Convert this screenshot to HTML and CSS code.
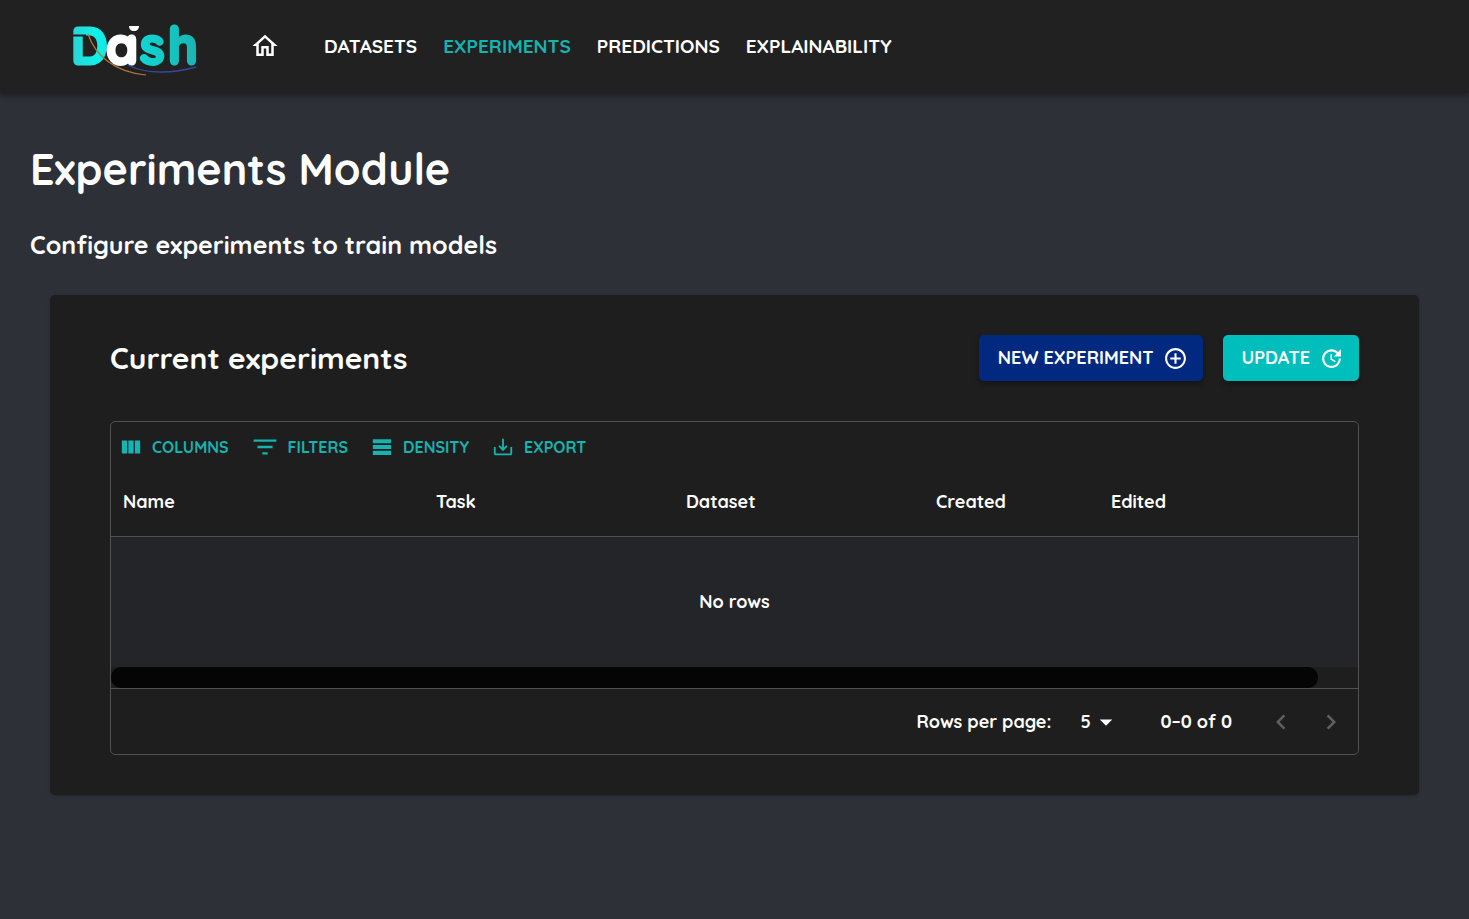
FILE: index.html
```html
<!DOCTYPE html>
<html lang="en">
<head>
<meta charset="utf-8">
<title>Dash - Experiments</title>
<link rel="stylesheet" href="styles.css">
</head>
<body>
<header class="appbar">
  <a class="logo" href="#" aria-label="Dash">
    <svg width="128" height="56" viewBox="0 0 128 56">
      <defs>
        <linearGradient id="teal" x1="0" y1="0" x2="1" y2="0">
          <stop offset="0" stop-color="#2cd3d6"/>
          <stop offset="0.2" stop-color="#10f0ea"/>
          <stop offset="0.6" stop-color="#12d2ce"/>
          <stop offset="1" stop-color="#1ab3b3"/>
        </linearGradient>
      </defs>
      <text class="logo-text" x="-1 34 68 96" y="46"><tspan class="logo-teal">D</tspan><tspan class="logo-white">a</tspan><tspan class="logo-teal">sh</tspan></text>
      <path d="M57 8h10c0 3-2 5-5 5S57 11 57 8z" fill="#fff"/>
      <path d="M0 17.500h14" stroke="#212121" stroke-width="2"/>
      <path d="M16 16C23 37 42 54 74 57" fill="none" stroke="#b77a35" stroke-width="1.200"/>
      <path d="M56 47C75 57 103 55 124 49" fill="none" stroke="#36479c" stroke-width="1.400"/>
    </svg>
  </a>
  <nav class="nav">
    <a class="home" href="#" aria-label="Home">
      <svg width="30" height="30" viewBox="0 0 24 24" fill="currentColor"><path d="m12 5.690 5 4.500V18h-2v-6H9v6H7v-7.810l5-4.500M12 3 2 12h3v8h6v-6h2v6h6v-8h3L12 3z"/></svg>
    </a>
    <a class="nav-link" href="#">DATASETS</a>
    <a class="nav-link active" href="#">EXPERIMENTS</a>
    <a class="nav-link" href="#">PREDICTIONS</a>
    <a class="nav-link" href="#">EXPLAINABILITY</a>
  </nav>
</header>
<main class="page">
  <h1 class="title">Experiments Module</h1>
  <p class="subtitle">Configure experiments to train models</p>
  <section class="card">
    <div class="card-head">
      <h2 class="card-title">Current experiments</h2>
      <div class="actions">
        <button class="btn primary" type="button">NEW EXPERIMENT
          <svg width="25" height="25" viewBox="0 0 24 24" fill="currentColor"><path d="M13 7h-2v4H7v2h4v4h2v-4h4v-2h-4V7zm-1-5C6.480 2 2 6.480 2 12s4.480 10 10 10 10-4.480 10-10S17.520 2 12 2zm0 18c-4.410 0-8-3.590-8-8s3.590-8 8-8 8 3.590 8 8-3.590 8-8 8z"/></svg>
        </button>
        <button class="btn secondary" type="button">UPDATE
          <svg width="25" height="25" viewBox="0 0 24 24" fill="currentColor"><path d="M21 10.120h-6.780l2.740-2.820c-2.730-2.700-7.150-2.800-9.880-.1-2.730 2.710-2.730 7.080 0 9.790s7.150 2.710 9.880 0C18.320 15.650 19 14.080 19 12.100h2c0 1.980-.88 4.550-2.640 6.290-3.510 3.480-9.210 3.480-12.720 0-3.500-3.470-3.530-9.110-.02-12.580s9.140-3.470 12.650 0L21 3v7.120zM12.500 8v4.250l3.500 2.080-.72 1.210L11 13V8h1.500z"/></svg>
        </button>
      </div>
    </div>
    <div class="grid">
      <div class="toolbar">
        <button class="tool" type="button"><svg width="22" height="22" viewBox="0 0 24 24" fill="currentColor"><path d="M2 5h5.800v14H2zM9.100 5h5.800v14H9.100zM16.200 5H22v14h-5.800z"/></svg>COLUMNS</button>
        <button class="tool" type="button"><svg width="26" height="26" viewBox="0 0 24 24" fill="currentColor"><path d="M9.500 19h5v-2.200h-5V19zM1.500 5v2.200h21V5h-21zM5 13.100h14v-2.200H5v2.200z"/></svg>FILTERS</button>
        <button class="tool" type="button"><svg width="22" height="22" viewBox="0 0 24 24" fill="currentColor"><path d="M2 3.500h20V8H2zM2 9.800h20v4.500H2zM2 16.100h20v4.500H2z"/></svg>DENSITY</button>
        <button class="tool" type="button"><svg width="22" height="22" viewBox="0 0 24 24" fill="currentColor"><path d="M20 12v7H4v-7H2v7c0 1.100.9 2 2 2h16c1.100 0 2-.9 2-2v-7h-2zm-7 .67 2.590-2.580L17 11.500l-5 5-5-5 1.410-1.410L11 12.670V3h2z"/></svg>EXPORT</button>
      </div>
      <table class="table">
        <thead>
          <tr><th class="c-name">Name</th><th class="c-wide">Task</th><th class="c-wide">Dataset</th><th class="c-date">Created</th><th>Edited</th></tr>
        </thead>
        <tbody>
          <tr><td class="empty" colspan="5">No rows</td></tr>
        </tbody>
      </table>
      <div class="scrollbar"><div class="thumb"></div></div>
      <div class="pager">
        <label for="rows">Rows per page:</label>
        <div class="select">
          <select id="rows"><option>5</option><option>10</option></select>
          <svg class="caret" width="30" height="30" viewBox="0 0 24 24" fill="currentColor"><path d="m7 10 5 5 5-5z"/></svg>
        </div>
        <span class="range">0–0 of 0</span>
        <button class="page-btn" type="button" aria-label="Previous page" disabled><svg width="30" height="30" viewBox="0 0 24 24" fill="currentColor"><path d="M15.410 7.410 14 6l-6 6 6 6 1.410-1.410L10.830 12z"/></svg></button>
        <button class="page-btn" type="button" aria-label="Next page" disabled><svg width="30" height="30" viewBox="0 0 24 24" fill="currentColor"><path d="M8.590 16.590 10 18l6-6-6-6-1.410 1.410L13.170 12z"/></svg></button>
      </div>
    </div>
  </section>
</main>
</body>
</html>
```
FILE: styles.css
```css
* { box-sizing: border-box; }
body {
  margin: 0;
  background: #2e3037;
  color: #fff;
  font-family: Quicksand, Lato, sans-serif;
  font-weight: 700;
  font-size: 18px;
  line-height: 24px;
}
svg { display: block; flex: none; }
a { color: inherit; text-decoration: none; }
button, select { font: inherit; color: inherit; border: 0; background: none; }
.appbar {
  display: flex;
  align-items: center;
  height: 93px;
  padding: 0 72px 2px;
  background: #212121;
  box-shadow: 0 2px 4px -1px rgba(0,0,0,.2), 0 4px 5px rgba(0,0,0,.14), 0 1px 10px rgba(0,0,0,.12);
}
.logo svg { overflow: visible; }
.logo-text { font-weight: 700; font-size: 51px; stroke-width: 3px; }
.logo-teal { fill: url(#teal); stroke: url(#teal); }
.logo-white { fill: #fff; stroke: #fff; }
.nav { display: flex; align-items: center; gap: 26px; margin-left: 50px; font-size: 19px; }
.home { margin-right: 18px; }
.active { color: #16b3b0; }
.page { padding: 45px 30px; }
.title { margin: 0; font-size: 43px; line-height: 62px; }
.subtitle { margin: 29px 0 0; font-size: 25px; line-height: 32px; }
.card {
  margin: 34px 20px 0;
  padding: 40px 60px;
  border-radius: 5px;
  background: #1e1e1e;
  box-shadow: 0 1px 3px rgba(0,0,0,.2);
}
.card-head { display: flex; align-items: center; justify-content: space-between; }
.card-title { margin: 0; font-size: 30px; line-height: 40px; }
.actions { display: flex; gap: 20px; }
.btn {
  display: flex;
  align-items: center;
  gap: 9px;
  height: 46px;
  padding: 0 15px 0 19px;
  border-radius: 5px;
  box-shadow: 0 3px 5px rgba(0,0,0,.3);
}
.primary { background: #00297f; }
.secondary { background: #00bebb; }
.grid { margin-top: 40px; border: 1px solid #515151; border-radius: 5px; }
.toolbar { display: flex; gap: 23px; height: 46px; padding: 4px 9px 0; }
.tool {
  display: flex;
  align-items: center;
  gap: 10px;
  padding: 0;
  color: #16b3b0;
  font-size: 16px;
}
.table { width: 100%; table-layout: fixed; border-collapse: collapse; }
.table th { height: 68px; padding: 0 12px; text-align: left; border-bottom: 1px solid #515151; }
.c-name { width: 313px; }
.c-wide { width: 250px; }
.c-date { width: 175px; }
.empty { height: 131px; padding: 0; text-align: center; background: #242529; }
.scrollbar { height: 21px; background: #1e1e1e; }
.thumb { width: calc(100% - 40px); height: 100%; border-radius: 10px; background: #050505; }
.pager {
  display: flex;
  align-items: center;
  justify-content: flex-end;
  height: 66px;
  padding-right: 2px;
  border-top: 1px solid #515151;
}
.select { position: relative; margin: 0 40px 0 25px; }
.select select { appearance: none; width: 44px; padding: 0 0 0 4px; }
.caret { position: absolute; right: -1px; top: -3px; pointer-events: none; }
.range { margin-right: 24px; }
.page-btn { padding: 10px; color: #606060; }
```
